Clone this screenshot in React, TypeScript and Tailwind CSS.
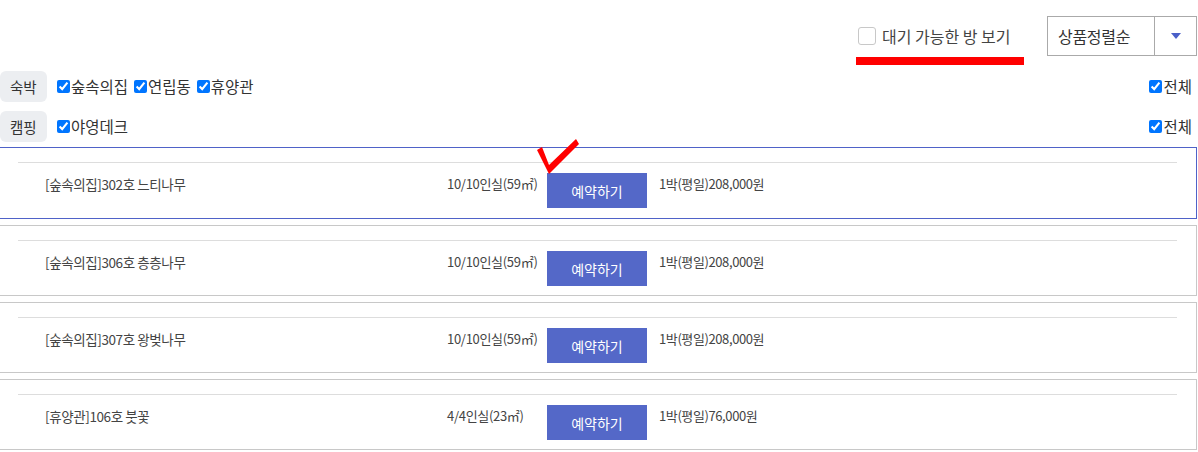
import clsx from "clsx";

const rooms = [
  { name: "[숲속의집]302호 느티나무", cap: "10/10인실(59㎡)", price: "1박(평일)208,000원", active: true },
  { name: "[숲속의집]306호 층층나무", cap: "10/10인실(59㎡)", price: "1박(평일)208,000원", active: false },
  { name: "[숲속의집]307호 왕벚나무", cap: "10/10인실(59㎡)", price: "1박(평일)208,000원", active: false },
  { name: "[휴양관]106호 붓꽃", cap: "4/4인실(23㎡)", price: "1박(평일)76,000원", active: false },
];

const filters = [
  { tag: "숙박", items: ["숲속의집", "연립동", "휴양관"] },
  { tag: "캠핑", items: ["야영데크"] },
];

const Check = ({ label }: { label: string }) => (
  <label className="flex items-center">
    <input type="checkbox" defaultChecked className="w-[13px] h-[13px] m-0 mr-px" />
    <span>{label}</span>
  </label>
);

const App = () => {
  return (
    <div
      className="relative w-[1198px] h-[452px] overflow-hidden bg-white text-[#333]"
      style={{ fontFamily: '"Noto Sans CJK KR", "Noto Sans", sans-serif' }}
    >
      {/* top options */}
      <div className="flex justify-end items-start pt-4 pr-px">
        <div className="flex flex-col w-[168px]">
          <label className="flex items-center h-10 pl-[2px] gap-[6px] text-[16px] text-[#444]">
            <span className="w-[18px] h-[18px] border border-[#c8c8c8] rounded-[3px] bg-white" />
            <span>대기 가능한 방 보기</span>
          </label>
          <div className="mt-px h-[8px] bg-[#ff0000]" />
        </div>
        <div className="ml-[23px] flex w-[150px] h-10 border border-[#aaaaaa] bg-white">
          <div className="flex-1 flex items-center pl-[10px] text-[16px] tracking-[-0.3px] text-[#333]">
            상품정렬순
          </div>
          <div className="w-[42px] border-l border-[#aaaaaa] flex items-center justify-center">
            <svg width="10" height="7" viewBox="0 0 10 7">
              <path d="M0 0 L10 0 L5 6 Z" fill="#4a5fc8" />
            </svg>
          </div>
        </div>
      </div>

      {/* filters */}
      <div className="mt-[6px] flex flex-col gap-[9px] pr-[6px]">
        {filters.map((f) => (
          <div key={f.tag} className="flex items-center h-[31px] text-[15.5px]">
            <div className="h-[31px] w-[47px] pl-[10px] flex items-center rounded-md bg-[#eceef1] text-[14.5px] text-[#333]">
              {f.tag}
            </div>
            <div className="ml-[10px] flex items-center gap-[6px]">
              {f.items.map((it) => (
                <Check key={it} label={it} />
              ))}
            </div>
            <div className="ml-auto">
              <Check label="전체" />
            </div>
          </div>
        ))}
      </div>

      {/* rooms */}
      <div className="mt-[5px] flex flex-col gap-[6px]">
        {rooms.map((r) => (
          <div
            key={r.name}
            className={clsx(
              "-ml-[2px] w-[1199px] border bg-white px-[19px] pt-[14px]",
              r.active ? "h-[72px] border-[#4f62c8]" : "h-[71px] border-[#c8c8c8]"
            )}
          >
            <div className="border-t border-[#dddddd] pt-[10px] pl-[27px] flex items-start text-[13px] leading-[18px] text-[#444]">
              <div className="w-[402px] pt-[2px] text-[13.5px] tracking-[-0.4px]">{r.name}</div>
              <div className="w-[100px] pt-[2px] tracking-[-0.3px]">{r.cap}</div>
              <button className="w-[100px] h-[35px] bg-[#5468c8] text-white text-[14px]">예약하기</button>
              <div className="ml-[12px] pt-[2px] tracking-[-0.4px]">{r.price}</div>
            </div>
          </div>
        ))}
      </div>

      {/* red check mark annotation */}
      <svg className="absolute left-[534px] top-[136px]" width="48" height="40" viewBox="0 0 48 40">
        <path d="M3 14 L8 11 L15 29 L42 3 L45 8 L15 38 Z" fill="#ff0000" />
      </svg>
    </div>
  );
};

export default App;
